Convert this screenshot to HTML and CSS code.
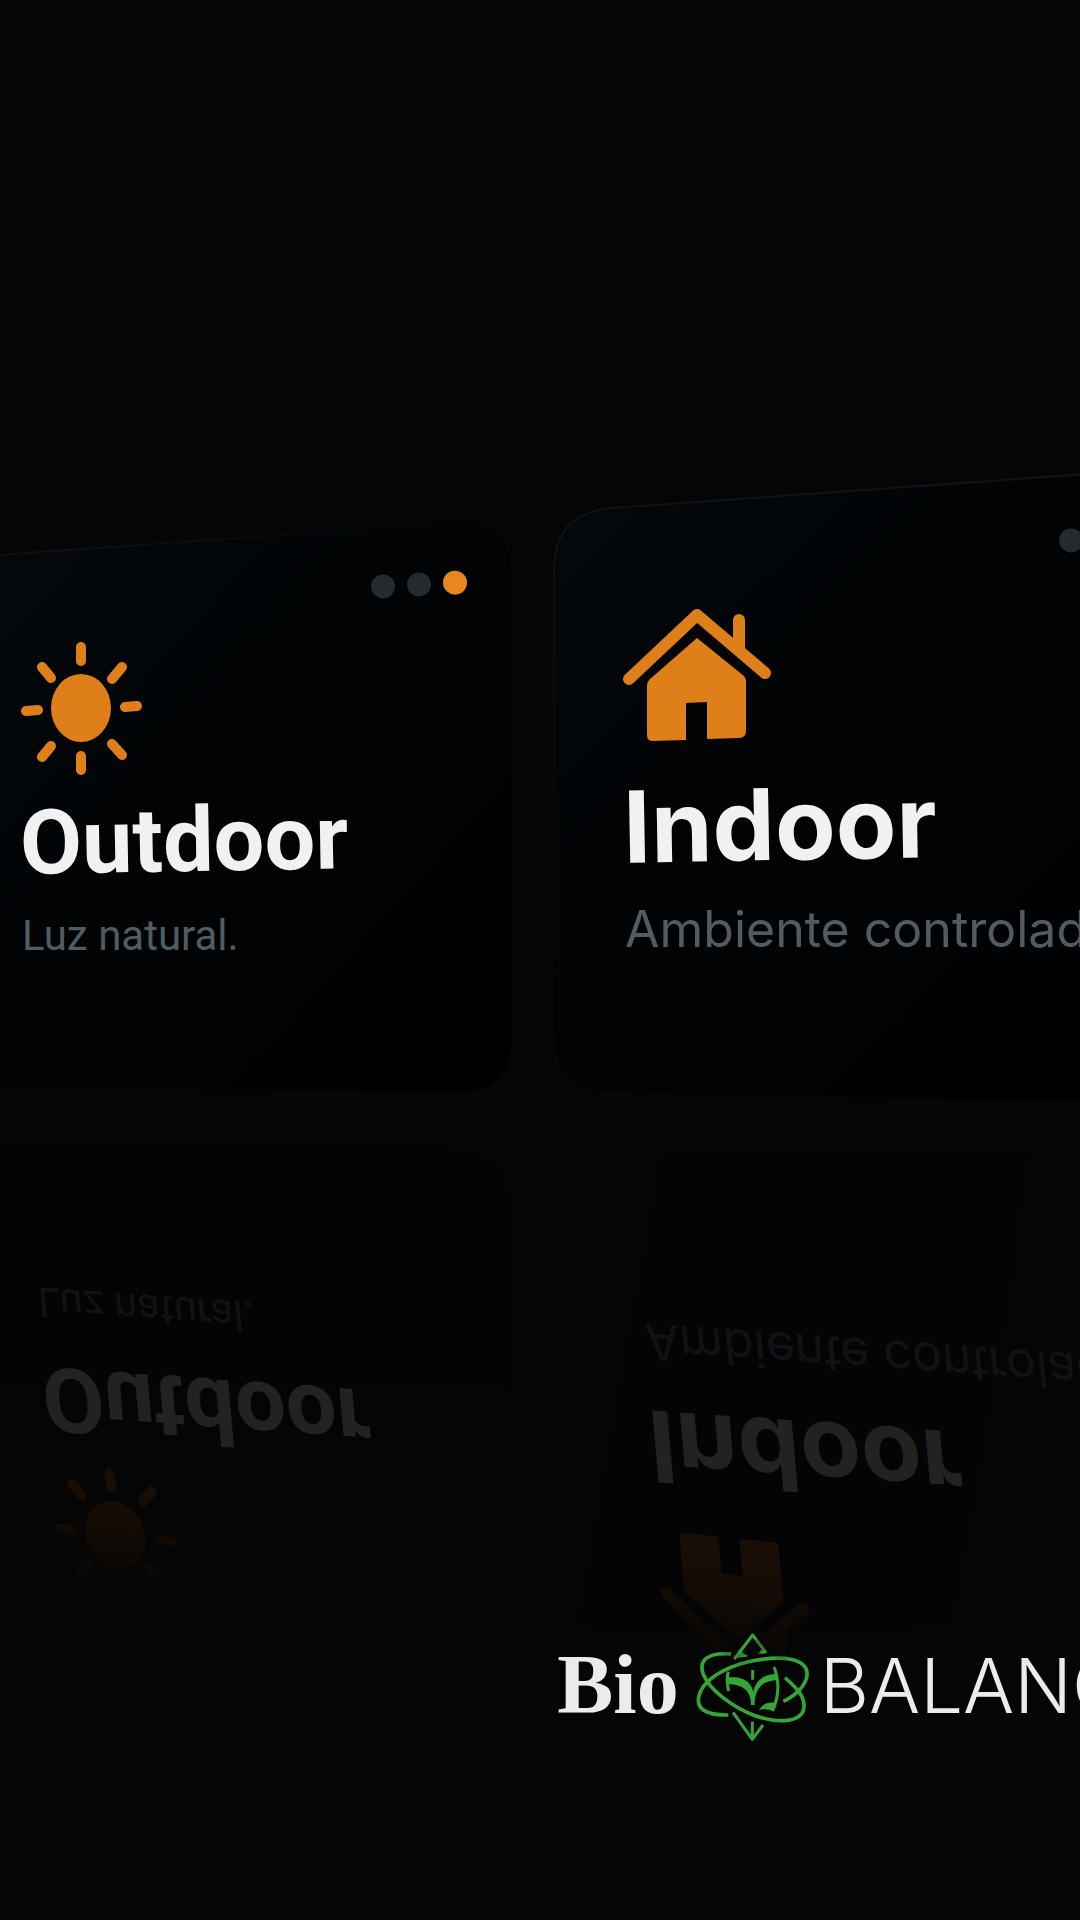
FILE: index.html
```html
<!DOCTYPE html>
<html lang="es">
<head>
<meta charset="utf-8">
<meta name="viewport" content="width=device-width, initial-scale=1">
<title>Bio Balance</title>
<link rel="stylesheet" href="styles.css">
</head>
<body>
<svg class="symbols" aria-hidden="true">
  <symbol id="sun" viewBox="0 0 124 136">
    <ellipse cx="61" cy="68" rx="30" ry="34" fill="currentColor"/>
    <path d="M61 7v14M61 116v14M6 71l12-1M105 67l12-1M22 27l9 11M92 39l10-12M22 117l9-11M92 104l10 11" fill="none" stroke="currentColor" stroke-width="10" stroke-linecap="round"/>
  </symbol>
  <symbol id="house" viewBox="0 0 164 140">
    <path d="M6 75L74 11L142 69M116 16V45" fill="none" stroke="currentColor" stroke-width="12" stroke-linecap="round" stroke-linejoin="round"/>
    <path d="M74 34L121 72Q123 74 123 77V127Q123 134 116 134L84 135V98L63 99V136L30 137Q24 137 24 131V81Q24 78 27 75Z" fill="currentColor"/>
  </symbol>
</svg>

<main class="scene">
  <section class="deck">
    <article class="card card-outdoor">
      <svg class="panel" viewBox="0 0 513 635" preserveAspectRatio="none" aria-hidden="true">
        <defs>
          <linearGradient id="shadeOut" x1="0" y1="0" x2="1" y2="1">
            <stop offset="0" stop-color="#05090b"/><stop offset=".45" stop-color="#010305"/><stop offset="1" stop-color="#000001"/>
          </linearGradient>
          <linearGradient id="edgeOut" gradientUnits="userSpaceOnUse" x1="0" y1="0" x2="455" y2="0">
            <stop offset="0" stop-color="#101015"/><stop offset="1" stop-color="#050506"/>
          </linearGradient>
        </defs>
        <path d="M-4 85L455 53Q512 50 512 108V565Q512 622 460 622L-4 617Z" fill="url(#shadeOut)"/>
        <path d="M-4 85L455 53" fill="none" stroke="url(#edgeOut)" stroke-width="2"/>
      </svg>
      <div class="dots"><span class="dot"></span><span class="dot"></span><span class="dot active"></span></div>
      <svg class="icon sun" aria-hidden="true"><use href="#sun"/></svg>
      <h2 class="title">Outdoor</h2>
      <p class="text">Luz natural.</p>
    </article>

    <article class="card card-indoor">
      <svg class="panel" viewBox="0 0 648 635" preserveAspectRatio="none" aria-hidden="true">
        <defs>
          <linearGradient id="shadeIn" x1="0" y1="0" x2="1" y2="1">
            <stop offset="0" stop-color="#05090b"/><stop offset=".4" stop-color="#010305"/><stop offset="1" stop-color="#000001"/>
          </linearGradient>
          <linearGradient id="edgeIn" x1="0" y1="0" x2="0" y2="1">
            <stop offset="0" stop-color="#121317"/><stop offset=".6" stop-color="#040506"/>
          </linearGradient>
        </defs>
        <path d="M1 100Q1 42 60 38L590 0Q647 0 647 60V574Q647 634 590 634L56 623Q1 623 1 565Z" fill="url(#shadeIn)" stroke="url(#edgeIn)" stroke-width="2"/>
      </svg>
      <div class="dots"><span class="dot"></span><span class="dot active"></span><span class="dot"></span></div>
      <svg class="icon house" aria-hidden="true"><use href="#house"/></svg>
      <h2 class="title">Indoor</h2>
      <p class="text">Ambiente controlado.</p>
    </article>
  </section>

  <section class="floor" aria-hidden="true">
    <div class="mirror card-outdoor">
      <p class="text">Luz natural.</p>
      <div class="title">Outdoor</div>
      <svg class="icon sun"><use href="#sun"/></svg>
    </div>
    <div class="mirror card-indoor">
      <p class="text">Ambiente controlado.</p>
      <div class="title">Indoor</div>
      <svg class="icon house"><use href="#house"/></svg>
    </div>
  </section>

  <footer class="brand">
    <span class="brand-bio">Bio</span>
    <svg class="brand-mark" viewBox="45 30 345 336" aria-hidden="true">
      <g fill="none" stroke="#35a537" stroke-width="11" stroke-linejoin="round">
        <path d="M153 99C80 93 55 120 70 160C88 205 155 258 225 284C300 309 374 305 372 252C371 220 345 197 315 170"/>
        <path d="M145 282C75 283 50 262 56 228C65 180 130 138 215 120C310 102 384 112 381 162C379 190 352 221 310 241"/>
        <path d="M163 114L218 42L257 94" stroke-width="9"/>
        <path d="M159 274L217 355L249 312M217 302V348" stroke-width="9"/>
        <path d="M145 152Q138 180 146 210M282 138Q307 200 278 270M218 147V176" stroke-width="9"/>
      </g>
      <g fill="#35a537">
        <path d="M142 170C190 163 214 185 220 212C226 180 252 156 292 160V178C250 178 224 200 224 252H213C213 210 190 190 142 190Z"/>
        <path d="M237 266C250 247 268 242 286 246L280 270Q262 262 237 266Z"/>
        <path d="M176 100Q182 93 188 92Q188 99 203 102L201 107L172 110Z"/>
        <path d="M231 99Q240 96 243 86L259 92V97Z"/>
        <path d="M202 335L217 358L232 335L217 342Z"/>
      </g>
    </svg>
    <span class="brand-name">BALANCE</span>
  </footer>
</main>
</body>
</html>
```
FILE: styles.css
```css
* {
  box-sizing: border-box;
}

body {
  margin: 0;
  background: #050505;
  color: #f1f1f3;
  font-family: Inter, "Liberation Sans", sans-serif;
}

h2,
p {
  margin: 0;
}

.symbols {
  display: none;
}

.scene {
  display: flex;
  flex-direction: column;
  min-height: 100vh;
  padding-top: 470px;
  overflow: hidden;
  white-space: nowrap;
}

.deck,
.floor {
  display: grid;
  grid-template-columns: 47.5% 60%;
  column-gap: 40px;
}

.card {
  position: relative;
  display: flex;
  flex-direction: column;
  min-height: 635px;
}

.card > * {
  position: relative;
}

.card > .panel {
  position: absolute;
  inset: 0;
  width: 100%;
  height: 100%;
}

.card.card-outdoor {
  padding: 100px 46px 0 20px;
}

.card.card-indoor {
  padding: 54px 46px 0 70px;
}

.dots {
  display: flex;
  justify-content: flex-end;
  gap: 12px;
  transform: rotate(-3deg);
  transform-origin: right center;
}

.dot {
  width: 24px;
  height: 24px;
  border-radius: 50%;
  background: #242b2e;
}

.dot.active {
  background: #e8871e;
}

.icon {
  flex: none;
  color: #de7f1a;
}

.sun {
  width: 124px;
  height: 136px;
  margin-top: 46px;
}

.house {
  width: 164px;
  height: 140px;
  margin-top: 56px;
}

.title {
  font-weight: 700;
  transform: rotate(-1deg);
}

.text {
  margin-top: 18px;
  padding-left: 2px;
  color: #525c60;
}

.card-outdoor .title {
  margin-top: 12px;
  font-family: Roboto, sans-serif;
  font-size: 90px;
  line-height: 104px;
}

.card-outdoor .text {
  font-family: Roboto, sans-serif;
  font-size: 42px;
  line-height: 52px;
}

.card-indoor .title {
  margin-top: 20px;
  font-size: 99px;
  line-height: 116px;
}

.card-indoor .text {
  margin-top: 20px;
  font-size: 50px;
  line-height: 58px;
}

/* Dim floor reflection of the cards */
.floor {
  margin-top: 45px;
  align-items: start;
}

.mirror {
  display: flex;
  flex-direction: column;
  align-items: flex-start;
  border-radius: 0 60px 0 0;
  background: linear-gradient(#030305, #050505 70%);
}

.mirror.card-outdoor {
  padding: 125px 0 0 36px;
}

.mirror.card-indoor {
  height: 481px;
  padding: 162px 0 0 90px;
  border-radius: 60px 60px 0 0;
  background: linear-gradient(100deg, #050505, #040406 30%, #050505);
}

.mirror > * {
  transform: skew(5deg, 4deg) scaleY(-1);
  transform-origin: left center;
}

.mirror .text {
  margin-top: 0;
  color: #121216;
}

.mirror .title {
  margin-top: 18px;
  margin-left: 6px;
  color: #222223;
}

.mirror .icon {
  margin-left: 18px;
  color: #190e05;
  mask-image: linear-gradient(transparent, #000 80%);
}

.mirror .sun {
  margin-top: 14px;
}

.mirror .house {
  margin-top: 24px;
}

.brand {
  display: flex;
  align-items: center;
  height: 112px;
  padding-left: 51.6%;
  color: #ebebeb;
}

.brand-bio,
.brand-name {
  padding-bottom: 4px;
  line-height: 96px;
}

.brand-bio {
  font-family: "Liberation Serif", serif;
  font-size: 84px;
  font-weight: 700;
}

.brand-mark {
  flex: none;
  width: 115px;
  height: 112px;
  margin: 0 10px 0 16px;
}

.brand-name {
  font-size: 76px;
  font-weight: 300;
}
```
